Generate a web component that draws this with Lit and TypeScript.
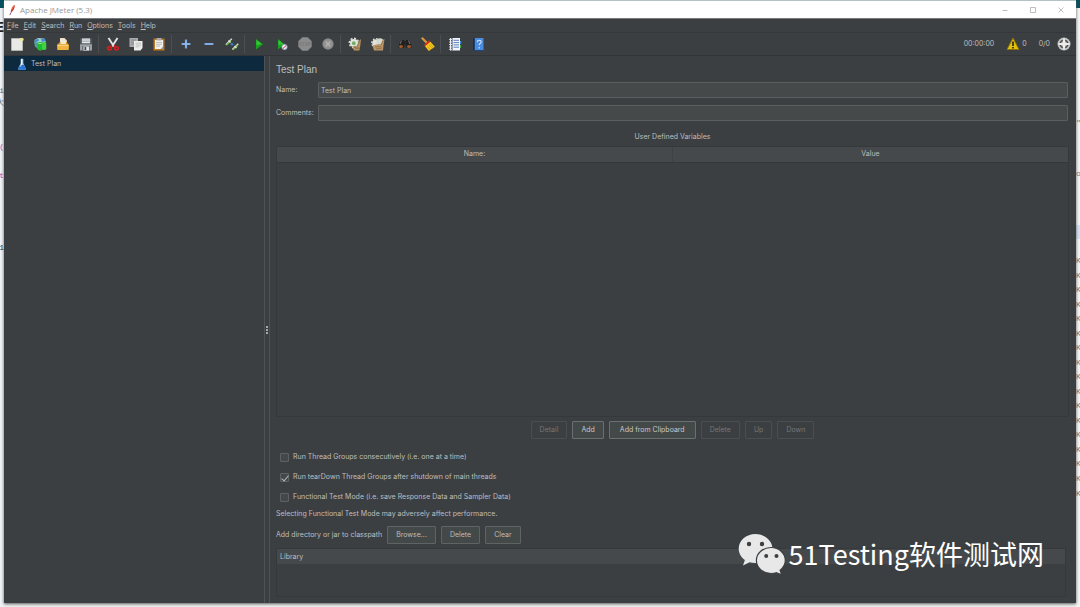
import { LitElement, html, css, svg } from "lit";
import { customElement, state } from "lit/decorators.js";
import { classMap } from "lit/directives/class-map.js";

const icons: Record<string, unknown> = {
  new: svg`<path d="M1.500 1.500h11v12h-11z" fill="#e9e9e6" stroke="#c9c9c4" stroke-width=".6"/><path d="M9.500 1.500h3v3z" fill="#fff6b0"/><circle cx="12" cy="2.500" r="1.800" fill="#efe27a" opacity=".8"/>`,
  templates: svg`<path d="M1.500 3L5 1l6 .5 2 3.500-5 3-6-1z" fill="#a9cfc6"/><path d="M1 5l4 .5v6.500l-3-2.500z" fill="#4f9fa0"/><path d="M1.500 3.500l3.500-2 1 2-3.500 2zM8 2l4-.5.5 2.500L9 5z" fill="#3a8fd0"/><rect x="4.500" y="5" width="5.500" height="8.500" rx="2" fill="#1ebc2c"/><rect x="9" y="5" width="4.300" height="8" rx="1.800" fill="#3fd244"/><path d="M5.500 6.500h3" stroke="#9df29a" stroke-width="1"/>`,
  open: svg`<path d="M4 1h4.500l2.500 2.500V8H4z" fill="#e8dcc0"/><path d="M1.500 8l2-3h7.500l1.500 3v5h-11z" fill="#d0901c"/><path d="M4.500 2h3.500l2 2V7H4.500z" fill="#efe8d8"/><path d="M1 7.500h12l-.5 5.500h-11z" fill="#f0b440"/><path d="M2 8.300h10" stroke="#fbe09a" stroke-width=".9"/>`,
  save: svg`<path d="M1.500 1.500h11v5h-11z" fill="#5d6872"/><path d="M3 1.500h8v5.500H3z" fill="#eceff1"/><path d="M3 3h8M3 4.600h8" stroke="#8f979d" stroke-width=".7"/><path d="M1 6.500h12v7H1z" fill="#9aa1a6"/><path d="M1 6.800h12" stroke="#3e4449" stroke-width=".8"/><path d="M3 9h8v4.500H3z" fill="#6d757b"/><path d="M4.500 9.500h5.500v4H4.500z" fill="#dfe2e4"/><path d="M5.500 10h1.700v3H5.500z" fill="#44494e"/>`,
  cut: svg`<path d="M2.500 1l5.500 8.500M11.500 1L6 9.500" stroke="#e2e4e5" stroke-width="1.900" fill="none"/><path d="M6 8.500L3.500 10M8 8.500l2.500 1.500" stroke="#c01818" stroke-width="2"/><ellipse cx="3.500" cy="11.300" rx="1.900" ry="1.600" fill="none" stroke="#d41f1f" stroke-width="1.600"/><ellipse cx="10.500" cy="11.300" rx="1.900" ry="1.600" fill="none" stroke="#d41f1f" stroke-width="1.600"/>`,
  copy: svg`<path d="M.5 1h8.500v9H.5z" fill="#a9abac"/><path d="M2 3h5M2 5h5M2 7h3" stroke="#818485" stroke-width=".8"/><path d="M5 4h8.500v7l-2 2.500H5z" fill="#ececea"/><path d="M6.500 6.200h5.500M6.500 8h5.500M6.500 9.800h4" stroke="#aeb0b0" stroke-width=".7"/>`,
  paste: svg`<path d="M1.500 1.500h11v12h-11z" fill="#b97a26"/><path d="M3 3h8v9H3z" fill="#f3f1ea"/><path d="M4.500 1h5v2.500h-5z" fill="#a7a9ab"/><path d="M4 5.500h6M4 7.300h6M4 9.100h4" stroke="#a4a6a8" stroke-width=".7"/><path d="M8.500 12l2.500-2.500V12z" fill="#9fa0a0"/>`,
  expand: svg`<path d="M7 2.500v9M2.500 7h9" stroke="#6f9fdc" stroke-width="2.200"/><path d="M7 3.500v7M3.500 7h7" stroke="#a8c8f2" stroke-width=".8"/>`,
  collapse: svg`<path d="M2.500 7h9" stroke="#6f9fdc" stroke-width="2"/><path d="M3.500 7h7" stroke="#a8c8f2" stroke-width=".7"/>`,
  toggle: svg`<path d="M.8 7.700L6.800 1.800M7.300 12.500L13.300 6.800" stroke="#d4dcd0" stroke-width="1.400"/><path d="M1.500 8.300L6 4M8.200 12.900L13 8.300" stroke="#5fae3a" stroke-width="1.200"/><path d="M3.500 3.500l2 2M9.500 9l2 2" stroke="#e0e8dc" stroke-width="1.300"/><circle cx="7" cy="7.200" r="1.300" fill="#3f7fd0"/>`,
  start: svg`<path d="M4 2l7 5.200-7 5.300z" fill="#17a51b"/><path d="M4.500 3l5 4-5 1z" fill="#35c838"/>`,
  startNoTimers: svg`<path d="M3 2l6.500 5.200L3 12.500z" fill="#17a51b"/><path d="M3.500 3L8 7 3.500 8z" fill="#35c838"/><circle cx="9.500" cy="10" r="2.700" fill="#e8eef5" stroke="#8798ac" stroke-width=".8"/><path d="M7.800 11.700l3.500-3.400" stroke="#d22" stroke-width="1"/>`,
  stop: svg`<path d="M4.300.3h5.400l4 4v5.400l-4 4H4.300l-4-4V4.300z" fill="#8b8b8b"/><path d="M3.500 5.500h-1.700v1.500h1.700v1.500H1.800M4.500 5.500h2M5.500 5.500v3M7.700 5.500h1.600v3H7.700zM10.800 8.700v-3.200h1.500V7h-1.500" fill="none" stroke="#777" stroke-width=".6"/>`,
  shutdown: svg`<circle cx="7" cy="7" r="5.700" fill="#858585"/><circle cx="7" cy="7" r="4.700" fill="#929292"/><path d="M4.800 4.800l4.400 4.400M9.200 4.800L4.800 9.200" stroke="#b2b2b2" stroke-width="1.500"/>`,
  clear: svg`<circle cx="6" cy="6" r="4" fill="#e4e6e0"/><circle cx="6" cy="6" r="4.700" fill="none" stroke="#d9dcd5" stroke-width="1.500" stroke-dasharray="2 1.600"/><circle cx="5.800" cy="6.200" r="1.900" fill="#6fae5c"/><path d="M4.500 9.500l2.500-1 2 .5 1.500-4.500L13 2l-.7 6.500-1 5H6z" fill="#b99567"/><path d="M6 10.500l4.500-.5M9.500 9l2-4.500M7 12l4.500-1" stroke="#7d5a32" stroke-width=".6"/>`,
  clearAll: svg`<circle cx="5" cy="6" r="3.800" fill="#dfe1db"/><circle cx="9" cy="4.500" r="3.300" fill="#d3d6cf"/><circle cx="5" cy="6" r="4.300" fill="none" stroke="#d9dcd5" stroke-width="1.300" stroke-dasharray="1.800 1.500"/><path d="M1.500 8.500l4-1L8 7l2 .5 1.500-4.500L13.500 2l-1 6.500-.5 5H3z" fill="#b99567"/><path d="M4 10l6-.5M10 8l2-4M5 12l6-1" stroke="#7d5a32" stroke-width=".6"/>`,
  search: svg`<path d="M3 3h3l1 2.500L6 11H.5L1 6.500z" fill="#202020"/><path d="M11 3H8L7 5.500 8 11h5.500L13 6.500z" fill="#202020"/><path d="M3.500 3.500L2 7M10.500 3.500L12 7" stroke="#808080" stroke-width=".9"/><ellipse cx="3" cy="9.500" rx="2" ry="1.500" fill="#a05a2c"/><ellipse cx="11" cy="9.500" rx="2" ry="1.500" fill="#a05a2c"/>`,
  broom: svg`<path d="M.8.8l5.200 5.200" stroke="#d59a3c" stroke-width="2.200"/><path d="M3 8L8 3.300l1.500 2L5 9.500z" fill="#d3301f"/><path d="M4 9.300l5.500-4.500 4.300 5-6 4.200z" fill="#f3c51d"/><path d="M6.500 9.500l3 3.500M8 8l3.500 4M9.500 7l3 4" stroke="#c18e0e" stroke-width=".6"/>`,
  functions: svg`<path d="M2 1h10v12.500H2z" fill="#f2f5fa"/><path d="M3.200 1h1.300v12.500H3.200z" fill="#31445f"/><path d="M5.500 3.300h5.500M5.500 5.600h5.500M5.500 7.900h5.500M5.500 10.200h5.500" stroke="#5b7fbc" stroke-width="1"/><path d="M1 2.500h3M1 5h3M1 7.500h3M1 10h3M1 12.300h3" stroke="#dfe3e8" stroke-width=".9"/><path d="M12 4h1.200v3H12z" fill="#3d8be0"/><path d="M12 8h1.200v3H12z" fill="#43a53b"/>`,
  help: svg`<path d="M2 1.500L4 .8v12.400l-2 .4z" fill="#15305e"/><path d="M3.800 1h8.700v12.500H3.800z" fill="#4a8be0"/><path d="M2 13.500h10.500" stroke="#1c3d78" stroke-width=".8"/><path d="M6.300 5.200q0-1.900 1.900-1.900t1.900 1.700q0 1.200-1.300 1.800-.6.400-.6 1.500M8.200 10v1.400" fill="none" stroke="#d4e4fb" stroke-width="1.100"/>`,
  warning: svg`<path d="M7 1l6 11.500H1z" fill="#e2c20e" stroke="#8d7505" stroke-width="1"/><path d="M7 4.500v4.500M7 10v1.500" stroke="#26220a" stroke-width="1.600"/>`,
  remote: svg`<circle cx="7" cy="7" r="6.500" fill="#c4c4c4"/><circle cx="7" cy="7" r="3.800" fill="none" stroke="#4a4a4a" stroke-width="1.600"/><path d="M7 1.500v11M1.500 7h11" stroke="#ececec" stroke-width="2.200"/>`,
  flask: svg`<path d="M5.500 1h3v5l3 6.500q0 1.200-1 1.200h-7q-1 0-1-1.200l3-6.500z" fill="#b9cfe6"/><path d="M4.800 8h4.400l2.300 4.500q0 1.200-1 1.200h-7q-1 0-1-1.200z" fill="#2a76d6"/><path d="M6.500 1.500v5.500L5 10" stroke="#fff" stroke-width="1" fill="none"/>`,
  feather: svg`<path d="M10 1Q11 3.500 8.700 7l-3 3.500Q5.300 8 7 4.500z" fill="#cf2a35"/><path d="M10 1Q8 2 6.800 5l1 1Q9.500 3.500 10 1z" fill="#e8742b"/><path d="M5.700 10L4.500 13" stroke="#7b2a68" stroke-width=".9"/>`,
  minimize: svg`<path d="M4.500 7.500h5" stroke="#bbb" stroke-width="1"/>`,
  maximize: svg`<path d="M4.500 4.500h5v5h-5z" fill="none" stroke="#bdbdbd" stroke-width="1"/>`,
  close: svg`<path d="M4.500 4.500l5 5M9.500 4.500l-5 5" stroke="#b0b0b0" stroke-width=".8"/>`,
};

const icon = (name: string) =>
  html`<svg class="icon" viewBox="0 0 14 14" aria-hidden="true">${icons[name]}</svg>`;

const toolbarGroups: [string, string][][] = [
  [["new", "New"], ["templates", "Templates"], ["open", "Open"], ["save", "Save"]],
  [["cut", "Cut"], ["copy", "Copy"], ["paste", "Paste"]],
  [["expand", "Expand All"], ["collapse", "Collapse All"], ["toggle", "Toggle"]],
  [["start", "Start"], ["startNoTimers", "Start no pauses"], ["stop", "Stop"], ["shutdown", "Shutdown"]],
  [["clear", "Clear"], ["clearAll", "Clear All"]],
  [["search", "Search"], ["broom", "Reset Search"]],
  [["functions", "Function Helper"], ["help", "Help"]],
];

const base = css`
  * { box-sizing: border-box; }
  button, input { font: inherit; color: inherit; margin: 0; }
  .icon { width: 14px; height: 14px; display: block; flex: none; }
`;

@customElement("jm-toolbar")
export class JmToolbar extends LitElement {
  static styles = [base, css`
    :host { display: flex; align-items: center; height: 24px; padding: 0 5px 0 1px; border-top: 1px solid #35383a; border-bottom: 1px solid #323537; }
    .group { display: flex; }
    .group + .group { border-left: 1px solid #4c4f51; margin-left: 1px; padding-left: 2px; }
    .tool { display: grid; place-items: center; width: 23px; height: 18px; padding: 0; border: 0; background: none; }
    .status { margin-left: auto; display: flex; align-items: center; gap: 12px; }
    .count { display: flex; align-items: center; gap: 2px; }
    .remote { display: flex; align-items: center; gap: 7px; }
  `];
  render() {
    return html`
      ${toolbarGroups.map((group) => html`<div class="group">${group.map(([name, label]) => html`
        <button class="tool" aria-label=${label} ?disabled=${name === "stop" || name === "shutdown"}>${icon(name)}</button>`)}</div>`)}
      <div class="status">
        <span>00:00:00</span>
        <span class="count">${icon("warning")}0</span>
        <span class="remote">0/0${icon("remote")}</span>
      </div>`;
  }
}

@customElement("test-plan-panel")
export class TestPlanPanel extends LitElement {
  @state() private options = [
    { id: "serial", label: "Run Thread Groups consecutively (i.e. one at a time)", on: false },
    { id: "teardown", label: "Run tearDown Thread Groups after shutdown of main threads", on: true },
    { id: "functional", label: "Functional Test Mode (i.e. save Response Data and Sampler Data)", on: false },
  ];
  static styles = [base, css`
    :host { display: flex; flex-direction: column; padding: 7px 7px 6px 6px; min-width: 0; }
    h1 { margin: 0 0 6px; font: 400 10px/13px "Liberation Sans", Arial, sans-serif; }
    .fields { display: grid; grid-template-columns: 42px 1fr; row-gap: 7px; align-items: center; margin-right: 1px; }
    .text { width: 100%; height: 16px; padding: 0 2px; border: 1px solid #5b5e5f; border-radius: 1px; background: #45494a; outline: 0; }
    .caption { text-align: center; margin: 11px 0 4px; line-height: 10px; }
    .grid { border: 1px solid #36393b; }
    .variables { flex: 1; }
    table { width: 100%; border-collapse: collapse; table-layout: fixed; }
    th { height: 15px; padding: 0 3px; font-weight: 400; background: #45494b; border-bottom: 1px solid #35383a; }
    th + th { border-left: 1px solid #3f4244; }
    .library { height: 49px; margin: 4px 3px 0 0; }
    .library th { text-align: left; border: 0; }
    .actions { display: flex; justify-content: center; gap: 5px; margin: 4px 0 8px; }
    .button { height: 18px; padding: 0 8px; border: 1px solid #5f6364; border-radius: 1px; background: #434849; }
    .primary { color: #c8c8c8; border-color: #6a6f70; }
    .wide { padding: 0 10px; }
    .button:disabled { color: #74777a; background: none; border-color: #4b4e50; }
    .option { display: flex; align-items: center; gap: 4px; height: 20px; padding-left: 4px; }
    .check { appearance: none; width: 9px; height: 9px; border: 1px solid #5f6263; border-radius: 1px; background: #43484a; display: grid; place-items: center; }
    .check:checked::before { content: ""; width: 3px; height: 6px; border: solid #b9b9b9; border-width: 0 1px 1px 0; transform: rotate(40deg); }
    .note { margin: 2px 0 7px; line-height: 10px; }
    .classpath { display: flex; align-items: center; gap: 5px; }
  `];
  private toggle(id: string) {
    this.options = this.options.map((o) => (o.id === id ? { ...o, on: !o.on } : o));
  }
  render() {
    const actions: [string, boolean][] = [
      ["Detail", false], ["Add", true], ["Add from Clipboard", true], ["Delete", false], ["Up", false], ["Down", false],
    ];
    return html`
      <h1>Test Plan</h1>
      <div class="fields">
        <label for="name">Name:</label><input id="name" class="text" type="text" value="Test Plan" />
        <label for="comments">Comments:</label><input id="comments" class="text" type="text" />
      </div>
      <div class="caption">User Defined Variables</div>
      <div class="grid variables"><table><thead><tr><th>Name:</th><th>Value</th></tr></thead></table></div>
      <div class="actions">${actions.map(([label, enabled]) => html`
        <button class=${classMap({ button: true, primary: enabled, wide: label.length > 10 })} ?disabled=${!enabled}>${label}</button>`)}</div>
      ${this.options.map((o) => html`
        <div class="option">
          <input class="check" type="checkbox" id=${o.id} .checked=${o.on} @change=${() => this.toggle(o.id)} />
          <label for=${o.id}>${o.label}</label>
        </div>`)}
      <p class="note">Selecting Functional Test Mode may adversely affect performance.</p>
      <div class="classpath"><span>Add directory or jar to classpath</span>
        <button class="button">Browse...</button><button class="button">Delete</button><button class="button">Clear</button>
      </div>
      <div class="grid library"><table><thead><tr><th>Library</th></tr></thead></table></div>`;
  }
}

@customElement("app-root")
export class AppRoot extends LitElement {
  static styles = [base, css`
    :host { position: relative; display: grid; grid-template-columns: 4px minmax(0, 1fr) 4px; height: 100vh; overflow: hidden; background: #f1f2f3; font: 7px/10px Inter, "Liberation Sans", sans-serif; color: #bcbebf; }
    .edge { position: relative; overflow: hidden; background: #f0f3f7; font: 8px/10px "Liberation Mono", monospace; }
    .edge::before { content: ""; display: block; height: 8px; background: #00515f; }
    .left .peek { position: absolute; right: 0; }
    .heading { top: 20px; font: 700 14px/14px "Liberation Sans", sans-serif; color: #222; }
    .code-a { top: 86px; color: #666; }
    .code-b { top: 98px; color: #666; }
    .code-c { top: 142px; color: #c040c0; }
    .code-d { top: 171px; color: #c040c0; }
    .code-e { top: 243px; color: #222; }
    .right { background: #f5f5f5; }
    .right .peek { position: absolute; left: 0; color: #777; }
    .dots { top: 118px; }
    .word { top: 169px; }
    .highlight { position: absolute; top: 225px; left: 0; right: 0; height: 14px; background: #d4e5f6; }
    .keys { position: absolute; top: 254px; left: 0; height: 247px; display: flex; flex-direction: column; justify-content: space-around; color: #777; }
    .window { display: flex; flex-direction: column; margin-bottom: 4px; border-top: 1px solid #b4c2c8; background: #3c3f41; box-shadow: 0 1px 3px #555; z-index: 1; }
    .titlebar { display: flex; align-items: center; height: 18px; padding: 0 1px 0 2px; background: #fff; border-bottom: 1px solid #77797a; font: 8px/12px "Open Sans", sans-serif; color: #999; }
    .titlebar .icon { width: 12px; height: 12px; }
    .titlebar b { font-weight: 400; margin: 0 auto 0 2px; }
    .control { display: grid; place-items: center; width: 28px; height: 16px; padding: 0; border: 0; background: none; }
    .control .icon { width: 14px; height: 14px; }
    .menubar { display: flex; gap: 5px; height: 13px; padding: 0 3px; align-items: center; }
    .menu { padding: 0; border: 0; background: none; }
    .body { flex: 1; display: grid; grid-template-columns: minmax(0, 260px) 6px minmax(0, 1fr); min-height: 0; }
    .tree { margin: 0; padding: 0; list-style: none; }
    .node { display: flex; align-items: center; gap: 3px; width: 100%; height: 15px; padding: 0 12px; border: 0; background: #0d293e; text-align: left; }
    .node .icon { width: 12px; height: 12px; }
    .splitter { display: grid; place-content: center; gap: 1px; border: solid #505355; border-width: 0 1px; }
    .dot { width: 2px; height: 2px; background: #a5a7a8; }
    .watermark { position: absolute; z-index: 2; right: 36px; bottom: 32px; display: flex; align-items: center; gap: 3px; color: #fff; font: 27px/40px "Noto Sans CJK SC", sans-serif; white-space: nowrap; pointer-events: none; }
    .chat { width: 48px; height: 42px; }
  `];
  render() {
    return html`
      <div class="edge left" aria-hidden="true">
        <span class="peek heading">E</span><span class="peek code-a">.i</span><span class="peek code-b">大</span>
        <span class="peek code-c">(</span><span class="peek code-d">t</span><span class="peek code-e">1</span>
      </div>
      <main class="window">
        <header class="titlebar">${icon("feather")}<b>Apache JMeter (5.3)</b>
          ${["minimize", "maximize", "close"].map((n) => html`<button class="control" aria-label=${n}>${icon(n)}</button>`)}
        </header>
        <nav class="menubar">
          ${["File", "Edit", "Search", "Run", "Options", "Tools", "Help"].map((m) => html`<button class="menu"><u>${m[0]}</u>${m.slice(1)}</button>`)}
        </nav>
        <jm-toolbar></jm-toolbar>
        <div class="body">
          <ul class="tree"><li><button class="node">${icon("flask")}Test Plan</button></li></ul>
          <div class="splitter"><i class="dot"></i><i class="dot"></i><i class="dot"></i></div>
          <test-plan-panel></test-plan-panel>
        </div>
      </main>
      <div class="edge right" aria-hidden="true">
        <span class="peek dots">"</span><span class="peek word">oi</span><i class="highlight"></i>
        <div class="keys">${Array.from({ length: 17 }, () => html`<span>K</span>`)}</div>
      </div>
      <div class="watermark">
        <svg class="chat" viewBox="0 0 48 42" aria-hidden="true">
          <path d="M17.500 1C8 1 .7 7.600.7 15.800c0 4.600 2.400 8.500 6.200 11.200L5 32.500l6.500-3.300q3 .8 6 .8c9.500 0 17-6.500 17-14.300S27 1 17.500 1z" fill="#e8e8e8"/>
          <path d="M33 14.500c-8 0-14.600 5.700-14.600 12.900S25 40.500 33 40.500q2.800 0 5.200-.8l5.500 2-1.600-4.500c3-2.500 5.200-5.700 5.200-9.800 0-7.200-6.300-12.900-14.300-12.900z" fill="#e8e8e8" stroke="#3c3f41" stroke-width="1.200"/>
          <g fill="#3c3f41"><circle cx="11" cy="11" r="2.200"/><circle cx="24" cy="11" r="2.200"/><circle cx="28.200" cy="23" r="2"/><circle cx="38.500" cy="23" r="2"/></g>
        </svg>
        <span>51Testing软件测试网</span>
      </div>`;
  }
}
